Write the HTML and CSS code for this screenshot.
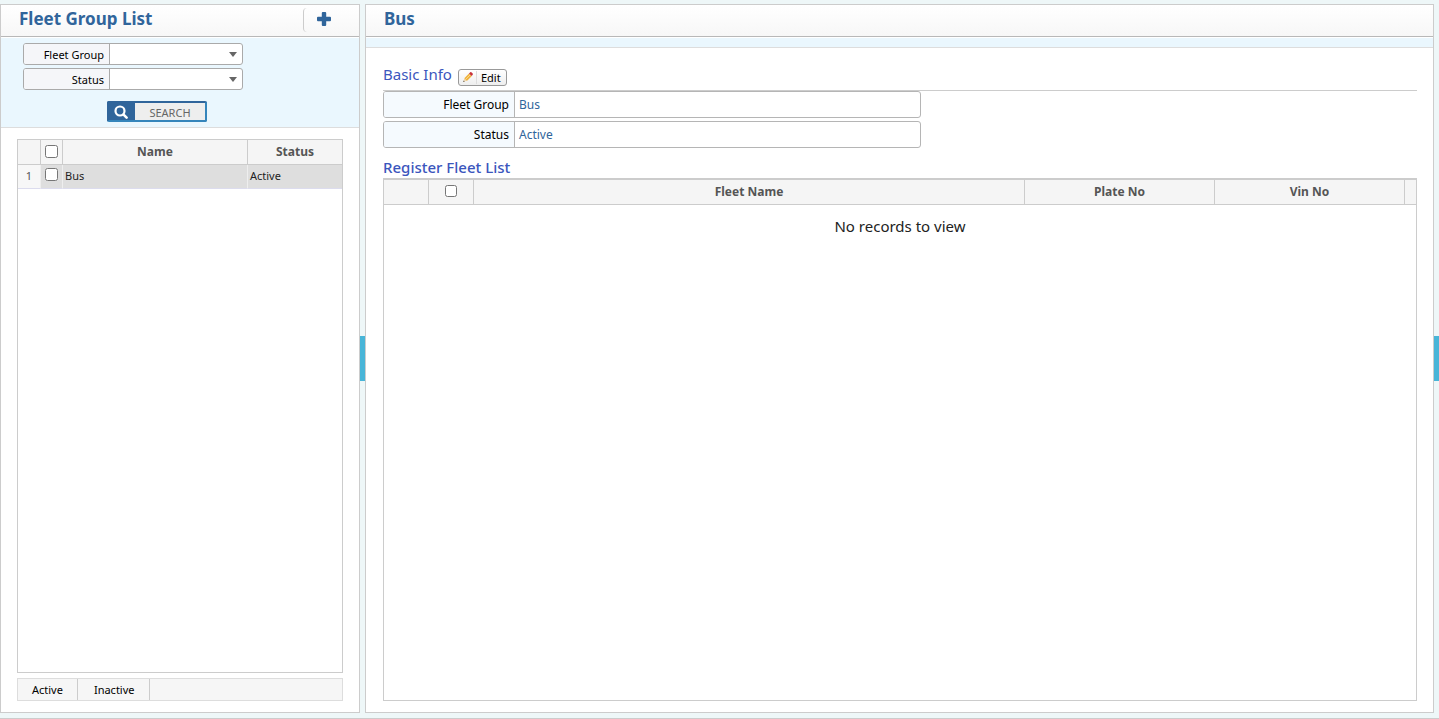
FILE: index.html
```html
<!DOCTYPE html>
<html lang="en">
    <head>
        <meta charset="utf-8">
        <title>Fleet Group List</title>
        <link rel="stylesheet" href="styles.css">
    </head>

    <body>
        <div class="main">
            <div class="panel list">
                <div class="title">
                    <h1>Fleet Group List</h1>
                    <button type="button" class="add" aria-label="Add">
                        <svg width="14" height="14" viewBox="0 0 14 14"><path d="M4.8 1Q4.8 0 5.8 0h2.4Q9.2 0 9.2 1v3.8H13Q14 4.8 14 5.8v2.4Q14 9.2 13 9.2H9.2V13Q9.2 14 8.2 14H5.8Q4.8 14 4.8 13V9.2H1Q0 9.2 0 8.2V5.8Q0 4.8 1 4.8h3.8z" fill="#30659b"/></svg>
                    </button>
                </div>

                <form class="search">
                    <div class="field">
                        <label for="group">Fleet Group</label>
                        <div class="select">
                            <select id="group"><option></option><option>Bus</option></select>
                        </div>
                    </div>

                    <div class="field">
                        <label for="status">Status</label>
                        <div class="select">
                            <select id="status"><option></option><option>Active</option><option>Inactive</option></select>
                        </div>
                    </div>

                    <button type="button" class="btn-search">
                        <span class="btn-icon">
                            <svg width="14" height="14" viewBox="0 0 14 14"><circle cx="6" cy="6" r="4.5" fill="none" stroke="#fff" stroke-width="2.2"/><path d="M9.6 9.6l3 3" stroke="#fff" stroke-width="2.6" stroke-linecap="round"/></svg>
                        </span>
                        <span class="btn-text">SEARCH</span>
                    </button>
                </form>

                <div class="list-body">
                    <div class="grid">
                        <table>
                            <colgroup>
                                <col class="c-num">
                                <col class="c-check">
                                <col>
                                <col class="c-status">
                            </colgroup>
                            <thead>
                                <tr>
                                    <th></th>
                                    <th><input type="checkbox" aria-label="Select all"></th>
                                    <th>Name</th>
                                    <th>Status</th>
                                </tr>
                            </thead>
                            <tbody>
                                <tr class="selected">
                                    <td class="num">1</td>
                                    <td class="check"><input type="checkbox" aria-label="Select Bus"></td>
                                    <td>Bus</td>
                                    <td>Active</td>
                                </tr>
                            </tbody>
                        </table>
                    </div>

                    <div class="toolbar">
                        <button type="button">Active</button>
                        <button type="button">Inactive</button>
                    </div>
                </div>
            </div>

            <div class="splitter"></div>

            <div class="panel detail">
                <div class="title">
                    <h1>Bus</h1>
                </div>

                <div class="strip"></div>

                <div class="detail-body">
                    <div class="section">
                        <h2>Basic Info</h2>
                        <button type="button" class="edit">
                            <svg width="12" height="12" viewBox="0 0 12 12"><path d="M1.6 10.4l1.2-3.6L7 2.6l2.6 2.6-4.2 4.2z" fill="#f0b23c"/><path d="M3.8 8.2l4.4-4.4" stroke="#fbd98a"/><path d="M7 2.4l1.2-1.2Q8.8.8 9.4 1.3l1.3 1.3q.4.6 0 1.1L9.6 5z" fill="#c8323a"/><path d="M2.6 7.4l-1.2 3.4 3.4-1.2z" fill="#efd9b4"/><path d="M1.8 9.6l-.6 1.4 1.4-.6z" fill="#333"/></svg>
                            <span>Edit</span>
                        </button>
                    </div>

                    <dl class="info">
                        <div class="row">
                            <dt>Fleet Group</dt>
                            <dd>Bus</dd>
                        </div>
                        <div class="row">
                            <dt>Status</dt>
                            <dd>Active</dd>
                        </div>
                    </dl>

                    <h3>Register Fleet List</h3>

                    <div class="grid">
                        <table>
                            <colgroup>
                                <col class="c-fleet">
                                <col class="c-fleet">
                                <col>
                                <col class="c-wide">
                                <col class="c-wide">
                                <col class="c-scroll">
                            </colgroup>
                            <thead>
                                <tr>
                                    <th></th>
                                    <th><input type="checkbox" class="small" aria-label="Select all fleets"></th>
                                    <th>Fleet Name</th>
                                    <th>Plate No</th>
                                    <th>Vin No</th>
                                    <th></th>
                                </tr>
                            </thead>
                        </table>
                        <p class="empty">No records to view</p>
                    </div>
                </div>
            </div>

            <div class="splitter"></div>
        </div>
    </body>
</html>
```
FILE: styles.css
```css
*
{
    box-sizing: border-box;
}

body
{
    display: flex;
    flex-direction: column;
    height: 100vh;
    margin: 0;
    padding-top: 4px;
    background: #eef7f8;
    font-family: "Noto Sans", "Open Sans", sans-serif;
    font-size: 11px;
    color: #222;
}

button
{
    font-family: inherit;
    cursor: pointer;
}

.main
{
    display: flex;
    flex: 1;
    min-height: 0;
    padding-bottom: 5px;
    border-bottom: 1px solid #ccc;
}

.panel
{
    display: flex;
    flex-direction: column;
    border: 1px solid #ccc;
    background: white;
}

.list
{
    width: 360px;
}

.detail
{
    flex: 1;
    min-width: 0;
}

.splitter
{
    display: flex;
    align-items: center;
    width: 5px;
}

.splitter::before
{
    content: "";
    width: 5px;
    height: 45px;
    background: #48b5d8;
}

.title
{
    display: flex;
    justify-content: space-between;
    height: 32px;
    padding-left: 18px;
    border-bottom: 1px solid #b8b8b8;
    margin-bottom: 1px;
    background: linear-gradient(white, #f7f7f7);
}

.title h1
{
    margin: 0;
    font-size: 17px;
    line-height: 28px;
    color: #30659b;
}

.add
{
    width: 56px;
    height: 24px;
    margin-top: 3px;
    padding: 0 16px 2px 0;
    border: none;
    border-left: 1px solid #ccc;
    border-radius: 4px 0 0 4px;
    background: none;
}

.add svg
{
    display: block;
    margin: 0 auto;
}

.search
{
    padding: 5px 22px;
    border-bottom: 1px solid #ddd;
    background: #eaf7fe;
}

.field
{
    display: flex;
    width: 220px;
    height: 22px;
    margin-bottom: 3px;
    border: 1px solid #aaa;
    border-radius: 3px;
    background: white;
    overflow: hidden;
}

.field label
{
    width: 86px;
    padding-right: 5px;
    border-right: 1px solid #aaa;
    background: #f5f6f9;
    line-height: 22px;
    text-align: right;
    color: black;
}

.select
{
    position: relative;
    flex: 1;
}

.select select
{
    width: 100%;
    height: 100%;
    padding: 0 20px 0 4px;
    border: none;
    background: none;
    appearance: none;
    font: inherit;
}

.select::after
{
    content: "";
    position: absolute;
    top: 8px;
    right: 5px;
    border: 4px solid transparent;
    border-top: 5px solid #666;
    border-bottom: none;
    pointer-events: none;
}

.btn-search
{
    display: flex;
    width: 100px;
    height: 21px;
    margin: 11px 0 0 84px;
    padding: 0;
    border: 2px solid #30659b;
    border-color: #30659b #3585bb #3585bb #30659b;
    border-radius: 2px;
    background: #eee;
    font-size: 11px;
    line-height: 19px;
    color: #666;
}

.btn-icon
{
    display: flex;
    align-items: center;
    width: 26px;
    height: 100%;
    padding-left: 5px;
    background: #30659b;
}

.btn-text
{
    flex: 1;
}

.list-body
{
    display: flex;
    flex-direction: column;
    flex: 1;
    padding: 11px 16px;
}

.grid
{
    flex: 1;
    border: 1px solid #ccc;
}

table
{
    width: 100%;
    table-layout: fixed;
    border-collapse: separate;
    border-spacing: 0;
}

th
{
    height: 25px;
    padding: 0 0 2px;
    border-right: 1px solid #ccc;
    border-bottom: 1px solid #ccc;
    background: #f5f5f5;
    font-size: 12px;
    color: #555;
}

th:last-child
{
    border-right: none;
}

td
{
    height: 24px;
    padding: 0 2px 2px;
    border-right: 1px solid #eee;
    border-bottom: 1px solid #dcdcee;
}

td:last-child
{
    border-right: none;
}

.selected td
{
    background: #dedede;
}

.selected .num
{
    background: #f7f7f7;
    text-align: center;
    color: #555;
}

.check
{
    text-align: center;
    vertical-align: top;
}

input[type="checkbox"]
{
    display: block;
    width: 13px;
    height: 13px;
    margin: 0 auto;
}

.check input[type="checkbox"]
{
    margin-top: 3px;
}

input[type="checkbox"].small
{
    width: 12px;
    height: 12px;
}

.c-num
{
    width: 23px;
}

.c-check
{
    width: 22px;
}

.c-status
{
    width: 94px;
}

.c-fleet
{
    width: 45px;
}

.c-wide
{
    width: 190px;
}

.c-scroll
{
    width: 11px;
}

.toolbar
{
    display: flex;
    height: 23px;
    margin-top: 5px;
    border: 1px solid #ddd;
    background: #f6f6f6;
}

.toolbar button
{
    padding: 0 14px;
    border: none;
    border-right: 1px solid #ccc;
    background: none;
    font-size: 11px;
    color: black;
}

.toolbar button + button
{
    padding-left: 16px;
}

.strip
{
    height: 10px;
    border-bottom: 1px solid #ddd;
    background: #eaf7fe;
}

.detail-body
{
    display: flex;
    flex-direction: column;
    flex: 1;
    padding: 16px 16px 11px 17px;
}

.section
{
    display: flex;
    gap: 6px;
    height: 27px;
    border-bottom: 1px solid #ccc;
}

.section h2
{
    margin: 0;
    font-size: 15px;
    font-weight: normal;
    line-height: 20px;
    color: #3b56bd;
}

.edit
{
    display: flex;
    align-items: center;
    height: 17px;
    margin-top: 5px;
    padding: 0 5px 1px 3px;
    border: 1px solid #999;
    border-radius: 3px;
    background: linear-gradient(white, #eee);
    font-size: 11px;
    line-height: 13px;
    color: black;
}

.edit span
{
    margin-left: 2px;
    padding-left: 4px;
    border-left: 1px solid #ddd;
}

.info
{
    width: 52%;
    margin: 0;
}

.row
{
    display: flex;
    height: 27px;
    margin-bottom: 3px;
    border: 1px solid #b5b5b5;
    border-radius: 3px;
    font-size: 12px;
    line-height: 25px;
    overflow: hidden;
}

.row dt
{
    width: 131px;
    padding-right: 5px;
    border-right: 1px solid #b5b5b5;
    background: #f5fafe;
    text-align: right;
    color: black;
}

.row dd
{
    margin: 0;
    padding-left: 4px;
    color: #30659b;
}

h3
{
    height: 28px;
    margin: 0;
    padding-top: 5px;
    border-bottom: 1px solid #ccc;
    font-size: 15px;
    font-weight: 500;
    line-height: 22px;
    color: #3b56bd;
}

.empty
{
    margin: 0;
    padding-top: 10px;
    font-size: 15px;
    line-height: 22px;
    text-align: center;
}
```
